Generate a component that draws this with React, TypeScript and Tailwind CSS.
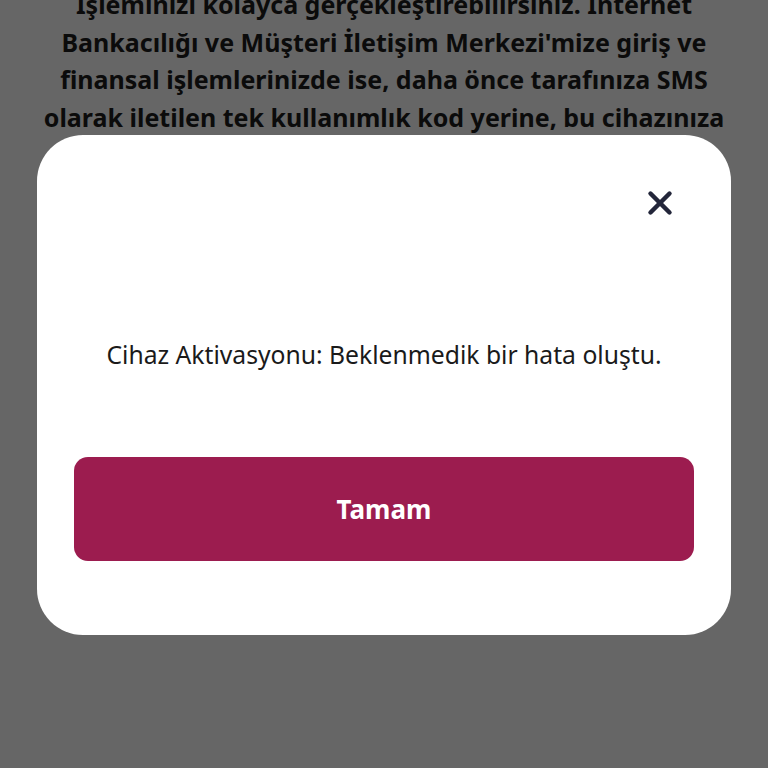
import { X } from "lucide-react";

const bgLines = [
  "İşleminizi kolayca gerçekleştirebilirsiniz. İnternet",
  "Bankacılığı ve Müşteri İletişim Merkezi'mize giriş ve",
  "finansal işlemlerinizde ise, daha önce tarafınıza SMS",
  "olarak iletilen tek kullanımlık kod yerine, bu cihazınıza",
];

export default function App() {
  return (
    <div
      className="relative h-[768px] w-[768px] overflow-hidden bg-white"
      style={{ fontFamily: "'Noto Sans', Lato, sans-serif" }}
    >
      {/* page text behind the dialog */}
      <div className="mt-[-14px] flex flex-col items-center text-[25px] font-bold leading-[37.5px] text-[#1c1c1c]">
        {bgLines.map((line) => (
          <p key={line} className="whitespace-nowrap">
            {line}
          </p>
        ))}
      </div>

      {/* overlay + dialog */}
      <div className="absolute inset-0 flex items-start justify-center bg-black/60 pt-[135px]">
        <div className="flex h-[500px] w-[694px] flex-col rounded-[46px] bg-white px-[37px]">
          <div className="flex justify-end pr-[19px] pt-[53px]">
            <button type="button" className="text-[#23263a]">
              <X size={38} strokeWidth={2.8} className="-m-[4px]" />
            </button>
          </div>
          <p className="mt-[121px] text-center text-[24.7px] leading-[32px] text-[#1a1a1a]">
            Cihaz Aktivasyonu: Beklenmedik bir hata oluştu.
          </p>
          <button
            type="button"
            className="mt-[86px] h-[104px] w-full rounded-[14px] bg-[#9c1c4f] text-[26px] font-bold text-white"
          >
            Tamam
          </button>
        </div>
      </div>
    </div>
  );
}
